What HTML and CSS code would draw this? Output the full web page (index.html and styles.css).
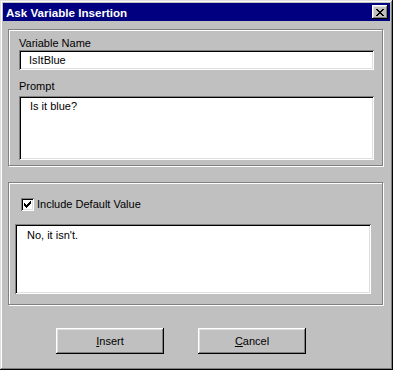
FILE: index.html
```html
<!DOCTYPE html>
<html lang="en">
<head>
  <meta charset="UTF-8">
  <meta name="viewport" content="width=device-width, initial-scale=1.0">
  <title>Ask Variable Insertion</title>
  <link rel="stylesheet" href="styles.css">
</head>
<body>
  <div class="dialog">
    <div class="titlebar">
      <span class="title">Ask Variable Insertion</span>
      <button class="close" type="button" aria-label="Close">
        <svg width="8" height="7" viewBox="0 0 8 7" shape-rendering="crispEdges">
          <path d="M0 0h2v1h-2zM6 0h2v1h-2zM1 1h2v1h-2zM5 1h2v1h-2zM2 2h4v1h-4zM3 3h2v1h-2zM2 4h4v1h-4zM1 5h2v1h-2zM5 5h2v1h-2zM0 6h2v1h-2zM6 6h2v1h-2z" fill="#000"/>
        </svg>
      </button>
    </div>

    <div class="body">
      <div class="group group-top">
        <label class="label" for="varName">Variable Name</label>
        <input class="field field-name" id="varName" type="text" value="IsItBlue">
        <label class="label label-prompt" for="prompt">Prompt</label>
        <textarea class="field field-prompt" id="prompt">Is it blue?</textarea>
      </div>

      <div class="group group-bottom">
        <label class="check-row">
          <span class="checkbox">
            <svg width="7" height="7" viewBox="0 0 7 7" shape-rendering="crispEdges">
              <path d="M6 0h1v1h-1zM5 1h2v1h-2zM0 2h1v1h-1zM4 2h3v1h-3zM0 3h2v1h-2zM3 3h3v1h-3zM0 4h5v1h-5zM1 5h3v1h-3zM2 6h1v1h-1z" fill="#000"/>
            </svg>
          </span>
          Include Default Value
        </label>
        <textarea class="field field-default" id="defaultValue">No, it isn't.</textarea>
      </div>

      <div class="actions">
        <button class="btn" type="button"><u>I</u>nsert</button>
        <button class="btn" type="button"><u>C</u>ancel</button>
      </div>
    </div>
  </div>
</body>
</html>
```

FILE: styles.css
```css
body {
  margin: 0;
  background: #c0c0c0;
  font-family: "Liberation Sans", Arial, sans-serif;
  font-size: 11px;
  color: #000;
}
.dialog {
  width: 393px;
  height: 370px;
  box-sizing: border-box;
  padding: 3px;
  background: #c0c0c0;
  box-shadow: inset -1px -1px #000, inset 1px 1px #dfdfdf, inset -2px -2px #808080, inset 2px 2px #fff;
}
.titlebar {
  height: 18px;
  background: #000080;
  color: #fff;
  display: flex;
  align-items: center;
  justify-content: space-between;
  padding: 0 2px 0 3px;
}
.title {
  font-weight: bold;
  font-size: 11.6px;
}
.close {
  width: 16px;
  height: 14px;
  padding: 0;
  border: 0;
  background: #c0c0c0;
  display: flex;
  align-items: center;
  justify-content: center;
  box-shadow: inset -1px -1px #000, inset 1px 1px #fff, inset -2px -2px #808080, inset 2px 2px #dfdfdf;
}
.body {
  padding: 8px 0 0 5px;
}
.group {
  width: 375px;
  box-sizing: border-box;
  border: 1px solid #808080;
  box-shadow: inset 1px 1px #fff, 1px 1px #fff;
}
.group-top {
  height: 137px;
  padding: 7px 0 0 10px;
}
.group-bottom {
  height: 123px;
  margin-top: 16px;
  padding: 15px 0 0 6px;
}
.label {
  display: block;
  height: 13px;
  line-height: 13px;
}
.label-prompt {
  margin: 10px 0 3px;
}
.field {
  display: block;
  margin: 0;
  border: 0;
  outline: none;
  resize: none;
  overflow: hidden;
  box-sizing: border-box;
  background: #fff;
  color: #000;
  font: inherit;
  line-height: 13px;
  box-shadow: inset 1px 1px #808080, inset -1px -1px #fff, inset 2px 2px #000, inset -2px -2px #dfdfdf;
}
.field-name {
  width: 355px;
  height: 20px;
  padding: 0 0 0 10px;
}
.field-prompt {
  width: 355px;
  height: 64px;
  padding: 4px 11px;
}
.check-row {
  display: flex;
  align-items: center;
  height: 13px;
  line-height: 13px;
  padding-left: 6px;
}
.checkbox {
  width: 13px;
  height: 13px;
  margin-right: 3px;
  box-sizing: border-box;
  background: #fff;
  display: flex;
  align-items: center;
  justify-content: center;
  box-shadow: inset 1px 1px #808080, inset -1px -1px #fff, inset 2px 2px #000, inset -2px -2px #dfdfdf;
}
.field-default {
  width: 356px;
  height: 70px;
  margin-top: 13px;
  padding: 5px 12px;
}
.actions {
  display: flex;
  gap: 34px;
  margin-top: 23px;
  padding-left: 48px;
}
.btn {
  width: 108px;
  height: 26px;
  padding: 0;
  border: 0;
  background: #c0c0c0;
  color: #000;
  font: inherit;
  box-shadow: inset -1px -1px #000, inset 1px 1px #fff, inset -2px -2px #808080, inset 2px 2px #dfdfdf;
}
```
